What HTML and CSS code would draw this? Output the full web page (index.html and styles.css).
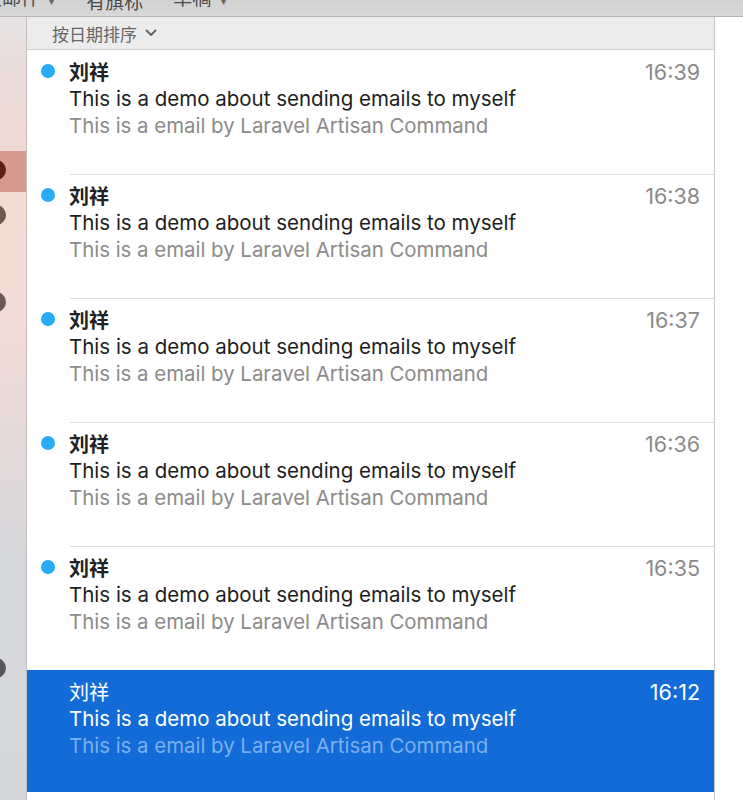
FILE: index.html
```html
<!DOCTYPE html>
<html lang="zh">
<head>
<meta charset="utf-8">
<title>Mail</title>
<link rel="stylesheet" href="styles.css">
</head>
<body>
<div class="app">
  <div class="toolbar">
    <span class="fav fav-first">已发邮件 <span class="caret">▾</span></span>
    <span class="fav fav-flag">有旗标</span>
    <span class="fav fav-draft">草稿 <span class="caret">▾</span></span>
  </div>
  <div class="main">
    <div class="sidebar">
      <div class="side-top"></div>
      <div class="side-sel"><span class="avatar a-dark"></span></div>
      <div class="side-rest">
        <span class="avatar a1"></span>
        <span class="avatar a2"></span>
        <span class="avatar a3"></span>
      </div>
    </div>
    <div class="list">
      <div class="sortbar">
        <span>按日期排序</span>
        <svg class="chev" width="12" height="8" viewBox="0 0 12 8"><path d="M1.5 1.5 L6 6 L10.5 1.5" fill="none" stroke="#666" stroke-width="2" stroke-linecap="round" stroke-linejoin="round"/></svg>
      </div>
      <div class="items">
        <div class="item unread">
          <span class="dot"></span>
          <div class="body">
            <div class="row1"><span class="from">刘祥</span><span class="time">16:39</span></div>
            <div class="subject">This is a demo about sending emails to myself</div>
            <div class="preview">This is a email by Laravel Artisan Command</div>
          </div>
        </div>
        <div class="item unread">
          <span class="dot"></span>
          <div class="body">
            <div class="row1"><span class="from">刘祥</span><span class="time">16:38</span></div>
            <div class="subject">This is a demo about sending emails to myself</div>
            <div class="preview">This is a email by Laravel Artisan Command</div>
          </div>
        </div>
        <div class="item unread">
          <span class="dot"></span>
          <div class="body">
            <div class="row1"><span class="from">刘祥</span><span class="time">16:37</span></div>
            <div class="subject">This is a demo about sending emails to myself</div>
            <div class="preview">This is a email by Laravel Artisan Command</div>
          </div>
        </div>
        <div class="item unread">
          <span class="dot"></span>
          <div class="body">
            <div class="row1"><span class="from">刘祥</span><span class="time">16:36</span></div>
            <div class="subject">This is a demo about sending emails to myself</div>
            <div class="preview">This is a email by Laravel Artisan Command</div>
          </div>
        </div>
        <div class="item unread">
          <span class="dot"></span>
          <div class="body">
            <div class="row1"><span class="from">刘祥</span><span class="time">16:35</span></div>
            <div class="subject">This is a demo about sending emails to myself</div>
            <div class="preview">This is a email by Laravel Artisan Command</div>
          </div>
        </div>
        <div class="item selected">
          <span class="dot"></span>
          <div class="body">
            <div class="row1"><span class="from">刘祥</span><span class="time">16:12</span></div>
            <div class="subject">This is a demo about sending emails to myself</div>
            <div class="preview">This is a email by Laravel Artisan Command</div>
          </div>
        </div>
      </div>
    </div>
    <div class="filler"></div>
  </div>
</div>
</body>
</html>
```
FILE: styles.css
```css
* { box-sizing: border-box; }
html, body { margin: 0; padding: 0; }
body {
  width: 743px;
  height: 800px;
  overflow: hidden;
  background: #fff;
  font-family: Inter, "Noto Sans CJK SC", sans-serif;
}
.app { display: flex; flex-direction: column; height: 800px; }

.toolbar {
  height: 17px;
  flex: none;
  background: linear-gradient(#d2d2d2, #d8d8d8);
  border-bottom: 1px solid #b4b4b4;
  display: flex;
  align-items: flex-end;
  overflow: hidden;
  font-family: "Noto Sans CJK SC", sans-serif;
  font-size: 19px;
  color: #4a4a4a;
  line-height: 24px;
}
.fav { white-space: nowrap; margin-bottom: 3px; }
.fav-first { margin-left: -36px; }
.fav-flag { margin-left: 32px; }
.fav-draft { margin-left: 30px; }
.caret { font-size: 10px; margin-left: 5px; color: #666; }

.main { flex: 1; display: flex; min-height: 0; }

.sidebar {
  width: 27px;
  flex: none;
  border-right: 1px solid #c9bcbc;
  display: flex;
  flex-direction: column;
  overflow: hidden;
}
.side-top {
  height: 134px;
  background: linear-gradient(#e6e3e5, #eadcda 40%, #efd9d3);
}
.side-sel {
  height: 41px;
  background: #d89a90;
  position: relative;
}
.side-rest {
  flex: 1;
  position: relative;
  background: linear-gradient(#f4dcd4 0px, #f2dcd6 120px, #e3d8d9 260px, #d7d8dc 360px, #d5d7db 100%);
}
.avatar {
  position: absolute;
  left: -14px;
  width: 20px;
  height: 20px;
  border-radius: 50%;
}
.a-dark { top: 9px; background: #5c1f16; }
.a1 { top: 13px; background: #6e5a55; }
.a2 { top: 100px; background: #6a5954; }
.a3 { top: 466px; background: #575757; }

.list {
  width: 688px;
  flex: none;
  border-right: 1px solid #c6c6c6;
  display: flex;
  flex-direction: column;
  background: #fff;
}
.sortbar {
  height: 33px;
  flex: none;
  background: #ececec;
  border-bottom: 1px solid #d2d2d2;
  display: flex;
  align-items: center;
  padding-left: 25px;
  font-family: "Noto Sans CJK SC", sans-serif;
  font-size: 17px;
  color: #666;
}
.chev { margin-left: 8px; width: 12px; }

.items { flex: 1; }
.item {
  height: 124px;
  display: flex;
  position: relative;
  padding: 8px 14px 0 0;
}
.item + .item::before {
  content: "";
  position: absolute;
  top: 0;
  left: 43px;
  right: 0;
  border-top: 1px solid #dedede;
}
.item + .item.selected::before { display: none; }
.dot {
  width: 14px;
  height: 14px;
  border-radius: 50%;
  background: #29abf6;
  margin: 6px 0 0 14px;
  flex: none;
}
.body { flex: 1; margin-left: 14px; }
.row1 { display: flex; justify-content: space-between; align-items: center; height: 27px; }
.from {
  font-family: "Noto Sans CJK SC", sans-serif;
  font-weight: 700;
  font-size: 20px;
  color: #222;
}
.time { font-size: 21.5px; color: #8a8a8a; }
.subject { font-size: 20.5px; line-height: 27px; color: #1e1e1e; white-space: nowrap; }
.preview { font-size: 20.4px; line-height: 28px; color: #8b8b8b; white-space: nowrap; }

.selected { background: #126bd7; height: 122px; }
.selected .dot { visibility: hidden; }
.selected .from { color: #fff; font-weight: 400; }
.selected .time, .selected .subject { color: #fff; }
.selected .preview { color: #7ab0ef; }

.filler { flex: 1; background: #fff; }
```
